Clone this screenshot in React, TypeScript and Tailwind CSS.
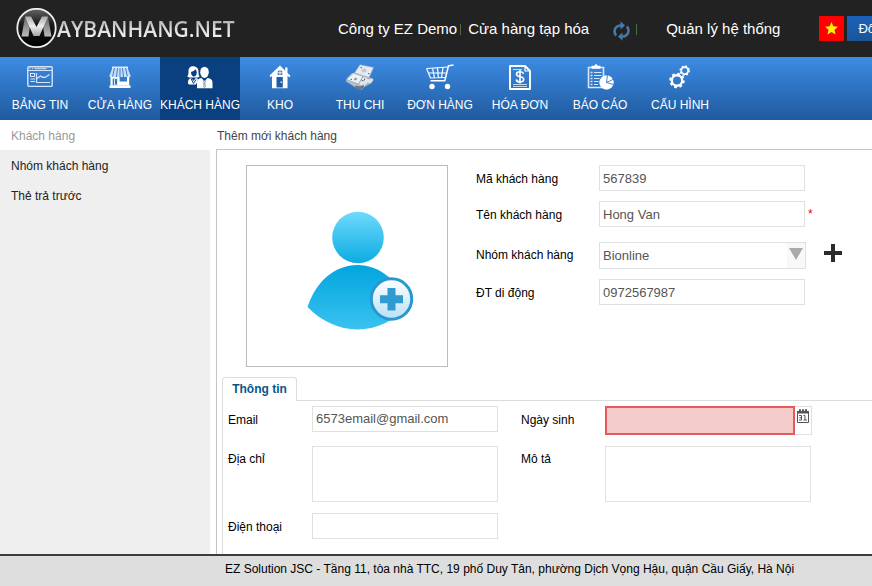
import React from "react";

const fieldBase =
  "border border-[#e0e0e0] bg-white text-[13px] text-[#555] outline-none";

function BoardIcon() {
  return (
    <svg width="26" height="22" viewBox="0 0 26 22" fill="none" stroke="#d6e6fa">
      <rect x="0.8" y="0.8" width="24.4" height="19.6" rx="1.2" strokeWidth="1.4" />
      <path d="M1 4.500h24M2.500 2.700h1M5 2.700h1M7.500 2.700h12" strokeWidth="1" />
      <path d="M3.500 13h4.500M3.500 15.500h4.500" />
      <rect x="3.500" y="7.500" width="4" height="3" />
      <path d="M9.500 7v9.500H23" strokeWidth="1.200" />
      <path d="M10 12.500l3.500-2.500 2.500 1.500 2.500-.3L22.500 8.500" strokeWidth="1.300" />
    </svg>
  );
}

function ShopIcon() {
  return (
    <svg width="22" height="22" viewBox="0 0 22 22" fill="#fff">
      <path d="M3 0.500h16v3H3z" fill="#d9e8fb" />
      <path d="M3 3h16l2.500 6.500v1.500H.5V9.500z" fill="#c9def8" />
      <path d="M5.500 2L3.500 11M8.500 2L7.500 11M11 2v9M13.500 2l1 9M16.500 2l2 9" stroke="#3a7dd0" strokeWidth="1" />
      <path d="M1.500 10.500h2.200v9H1.500zM18 10.500h2.200v9H18zM9 11h1.600v8.500H9zM9 15.500h10v4H9zM3.500 11h6v1.500h-6z" />
      <path d="M5.500 12.500h3v6.500h-3z" fill="#3573c2" stroke="#fff" strokeWidth=".8" />
      <path d="M.5 19.300h21V22H.5z" />
    </svg>
  );
}

function PeopleIcon() {
  return (
    <svg width="26" height="23" viewBox="0 0 26 23" fill="#fff">
      <path d="M6 .3C2.700.2 1.300 3 1.500 6c.1 2-.5 3.300-1.200 4.200C1 11 2 11.500 3 11.500h7c1 0 2-.4 2.500-1-1-1.300-1-2.500-1-4.500C11.500 2.500 9.500.3 6 .3z" />
      <path d="M4 6c2-.5 3.500-1.500 4.200-2.800C9.300 4 9.800 5 9.800 6.500c0 2.500-1.300 4-2.900 4S4 8.800 4 6z" fill="#0a4080" />
      <path d="M1 17.500c-.3-2.500.5-5 3.300-5.500l2.200 3 2.300-3c1.300.1 2 .8 2.200 1.500L9 18.500H2z" />
      <path d="M4 12.500l2.500 5 2.500-4" stroke="#0a4080" strokeWidth="1" fill="none" />
      <ellipse cx="17.500" cy="6.300" rx="4.300" ry="5.600" />
      <path d="M10 22.300v-5.500c0-3 1.500-4.300 4.500-4.800l3 3.500 3-3.500c3.500.5 5 1.800 5 4.800v5.500z" />
      <path d="M17.500 14l.9 1.300-.5.9.4 4.500-.8 1-.8-1 .4-4.500-.5-.9z" fill="#fff" stroke="#0a4080" strokeWidth=".5" />
    </svg>
  );
}

function HouseIcon() {
  return (
    <svg width="22" height="24" viewBox="0 0 22 24" fill="#fff">
      <path d="M11 .4L.5 10.500l1 1.800L3 11v12.300h15.500V11l2 1.300 1-1.500L18.500 8V2.500h-2.300v3.200z" />
      <path d="M8.700 7.500c0-1.500 1-2.300 2.300-2.300s2.300.8 2.300 2.300v2.600H8.700z" fill="#2f6fc0" />
      <path d="M11 5v5M8.500 7.800h5" stroke="#fff" strokeWidth=".9" />
      <path d="M7.500 12h6.300v10.500H7.500z" fill="#205ba8" />
      <path d="M11.500 16.500h1.300v1.500h-1.300z" />
    </svg>
  );
}

function MoneyIcon() {
  return (
    <svg width="28" height="27" viewBox="0 0 28 27">
      <path d="M1 14l5-5 10 2 9 3 2 1-1 4-6 3-5 4-5-2-5-3.500L0 17.500z" fill="#b4c0ce" />
      <path d="M14 .8L27.500 3.500l-4.500 10L8.500 9z" fill="#e6ebf1" stroke="#a5b3c3" strokeWidth=".6" />
      <path d="M7.500 9l9.500 3.500-4.500 7.500L.5 15.500z" fill="#eef2f6" stroke="#8d9db0" strokeWidth=".6" />
      <path d="M16.500 13l4-.5 1.500 2.500 4-1 1.500 2-3 3.500-3-.5-3.500 4-5.500-2.500z" fill="#e0e6ed" stroke="#8798ab" strokeWidth=".6" />
      <path d="M9 21.500l5.500 1 3-2 .5 3-4 2.500-4.500-1.500z" fill="#66768b" />
      <ellipse cx="18" cy="6.500" rx="2.600" ry="2" fill="#c0cad6" />
      <path d="M9 13.500l2.500 1.300-1.700 1.700-2-.7z" fill="#8a99ab" />
      <path d="M14.500 3.500l1.500.3M22 9.500l1.500.3M15.500 16l2 1M19 14.500l-1 2M4.500 15.200l1.500.5" stroke="#52647b" />
    </svg>
  );
}

function CartIcon() {
  return (
    <svg width="28" height="26" viewBox="0 0 28 26" fill="none" stroke="#fff" strokeWidth="1.200">
      <path d="M27.500 1l-5 .8-3.700 15H4.500" strokeWidth="1.500" />
      <path d="M.5 4.500L22 3M.5 4.500l4 9.500 15-.5M2 9h18.500M6.500 4l2 9.800M11.500 4l.8 9.500M17 3.500l-1.500 10" />
      <circle cx="6" cy="22.500" r="2.700" fill="#fff" stroke="none" />
      <circle cx="21.500" cy="22.500" r="2.700" fill="#fff" stroke="none" />
    </svg>
  );
}

function InvoiceIcon() {
  return (
    <svg width="22" height="25" viewBox="0 0 22 25" fill="none" stroke="#fff">
      <path d="M1 1h15L21 6v18H1z" strokeWidth="1.900" strokeLinejoin="round" />
      <path d="M16 1v5h5" strokeWidth="1.200" />
      <path d="M4 4.500h9M4 19.500h14M4 21.500h14" strokeWidth=".9" opacity=".8" />
      <path d="M14.500 8.800C14 7.200 12.700 6.800 11 6.800c-2 0-3.500.8-3.500 2.500 0 3.500 7.200 1.500 7.200 5 0 1.700-1.500 2.700-3.700 2.700-2 0-3.500-.7-3.800-2.500M11 5v13.500" strokeWidth="1.600" />
    </svg>
  );
}

function ReportIcon() {
  return (
    <svg width="27" height="26" viewBox="0 0 27 26" fill="none" stroke="#fff">
      <path d="M1.500 3.500h15v20h-15z" strokeWidth="1.600" stroke="#d8e7fa" />
      <path d="M4.500 1.800h3c0-1 .7-1.500 1.500-1.500s1.500.5 1.500 1.500h3v3h-9z" fill="#fff" stroke="none" />
      <path d="M7 8.500h7.500M7 11.500h7.500M7 14.500h5.500M7 17.500h4.500M7 20.500h4" stroke="#d8e7fa" />
      <path d="M3.500 8.500h2M3.500 11.500h2M3.500 14.500h2M3.500 17.500h2M3.500 20.500h2" strokeWidth="1.500" stroke="#d8e7fa" />
      <circle cx="19.500" cy="18.500" r="7.200" fill="#fff" stroke="none" />
      <path d="M19.500 18.500L20.500 10.500M19.500 18.500L27 15M19.500 18.500l7 2" stroke="#2a66b4" strokeWidth=".8" />
    </svg>
  );
}

function GearsIcon() {
  return (
    <svg width="22" height="24" viewBox="0 0 22 24" fill="none" stroke="#fff">
      <circle cx="8" cy="15.500" r="5.200" strokeWidth="2.400" />
      <circle cx="8" cy="15.500" r="6.800" strokeWidth="2" strokeDasharray="2.670 2.670" />
      <circle cx="15.700" cy="5.600" r="3.500" strokeWidth="1.800" />
      <circle cx="15.700" cy="5.600" r="4.600" strokeWidth="1.400" strokeDasharray="1.800 1.812" />
    </svg>
  );
}

const menu = [
  { label: "BẢNG TIN", icon: <BoardIcon /> },
  { label: "CỬA HÀNG", icon: <ShopIcon /> },
  { label: "KHÁCH HÀNG", icon: <PeopleIcon />, active: true },
  { label: "KHO", icon: <HouseIcon /> },
  { label: "THU CHI", icon: <MoneyIcon /> },
  { label: "ĐƠN HÀNG", icon: <CartIcon /> },
  { label: "HÓA ĐƠN", icon: <InvoiceIcon /> },
  { label: "BÁO CÁO", icon: <ReportIcon /> },
  { label: "CẤU HÌNH", icon: <GearsIcon /> },
];

function Logo() {
  return (
    <a href="#" className="flex w-[322px] shrink-0 items-center pl-[15px]">
      <svg width="42" height="42" viewBox="0 0 42 42" className="shrink-0">
        <defs>
          <linearGradient id="disc" x1="0" y1="0" x2="0" y2="1">
            <stop offset="0" stopColor="#666" />
            <stop offset=".4" stopColor="#1a1a1a" />
            <stop offset="1" stopColor="#000" />
          </linearGradient>
          <linearGradient id="leg" x1="0" y1="0" x2="0" y2="1">
            <stop offset="0" stopColor="#666" />
            <stop offset="1" stopColor="#bbb" />
          </linearGradient>
          <linearGradient id="vee" x1="0" y1="0" x2="0" y2="1">
            <stop offset="0" stopColor="#aaa" />
            <stop offset=".5" stopColor="#eee" />
            <stop offset="1" stopColor="#a5a5a5" />
          </linearGradient>
        </defs>
        <circle cx="21.500" cy="20" r="19.200" fill="url(#disc)" stroke="#efefef" strokeWidth="1.800" />
        <path d="M6.500 28.500L10 9h4.500l1 5-2 14.500zM36.500 28.500L33 9h-4.500l-1 5 2 14.500z" fill="url(#leg)" />
        <path d="M10 8.500h6L21.500 19 27 8.500h6L24.500 28h-6z" fill="url(#vee)" />
      </svg>
      <span className="bg-linear-to-b from-[#999] via-[#ddd] to-white bg-clip-text font-['Open_Sans',sans-serif] text-[21px] leading-7 font-semibold text-transparent">
        AYBANHANG.NET
      </span>
    </a>
  );
}

function Header() {
  return (
    <header className="flex h-[57px] items-center overflow-hidden bg-[#222] text-[15px] whitespace-nowrap text-white">
      <Logo />
      <div className="flex shrink-0 items-center pt-px pl-4">
        <span>Công ty EZ Demo</span>
        <span className="mr-[7px] ml-[3px] h-[11px] w-px bg-[#4a6b45]" />
        <span>Cửa hàng tạp hóa</span>
        <button type="button" aria-label="Làm mới" className="ml-6 pt-[3px]">
          <svg width="17" height="20" viewBox="0 0 17 20" fill="none" stroke="#4479a8" strokeWidth="2.600">
            <path d="M3.200 14.500C.8 12 1 8 3.500 6c1.300-1.200 3-1.700 5-1.500" />
            <path d="M13.800 5.500C16.200 8 16 12 13.500 14c-1.300 1.200-3 1.700-5 1.500" />
            <path d="M7.500.300v8.200L12 4.400zM9.500 11.500v8.200L5 15.600z" fill="#4479a8" stroke="none" />
          </svg>
        </button>
        <span className="ml-[6px] h-[11px] w-px bg-[#4a6b45]" />
        <a href="#" className="ml-[29px]">Quản lý hệ thống</a>
      </div>
      <div className="ml-[39px] flex shrink-0 gap-[3px]">
        <button type="button" aria-label="Tiếng Việt" className="flex size-[25px] items-center justify-center bg-[#f00]">
          <svg width="13" height="13" viewBox="0 0 14 14" fill="#fff200">
            <path d="M7 0l2 4.700 5 .4-3.800 3.400 1.200 5L7 10.800l-4.400 2.700 1.200-5L0 5.100l5-.4z" />
          </svg>
        </button>
        <button type="button" className="h-[25px] bg-linear-to-b from-[#1b62bb] to-[#1b5596] px-[11px] text-[13px]">Đổi</button>
      </div>
    </header>
  );
}

function Field({ id, label, value }: { id: string; label: string; value: string }) {
  return (
    <>
      <label htmlFor={id} className="pt-0.5">{label}</label>
      <input id={id} defaultValue={value} className={`${fieldBase} h-[26px] w-[206px] px-[3px]`} />
    </>
  );
}

function Avatar() {
  return (
    <button type="button" aria-label="Thêm ảnh" className="flex size-[202px] shrink-0 items-center justify-center border border-[#bbb] pt-2.5 pl-[26px]">
      <svg width="108" height="120" viewBox="0 0 108 120">
        <defs>
          <linearGradient id="head" x1="0" y1="0" x2="0" y2="1">
            <stop offset="0" stopColor="#6fdafc" />
            <stop offset="1" stopColor="#0cabe3" />
          </linearGradient>
          <linearGradient id="torso" x1="0" y1="0" x2="0" y2="1">
            <stop offset="0" stopColor="#02a5de" />
            <stop offset="1" stopColor="#3ac2f0" />
          </linearGradient>
          <linearGradient id="badge" x1="0" y1="0" x2="0" y2="1">
            <stop offset="0" stopColor="#fff" />
            <stop offset="1" stopColor="#b9e0f7" />
          </linearGradient>
        </defs>
        <circle cx="52" cy="26.500" r="25.800" fill="url(#head)" />
        <path d="M1.500 96C10 70 29 54 51.500 54S93 70 101.500 96C88 110 70 118.500 51.500 118.500S15 110 1.500 96z" fill="url(#torso)" />
        <circle cx="85.500" cy="88" r="20.200" fill="url(#badge)" stroke="#2899d0" strokeWidth="3" />
        <path d="M81.500 77h8v7.200h7.500v8h-7.500V99.500h-8v-7.300H74v-8h7.500z" fill="#2f9bd1" />
      </svg>
    </button>
  );
}

function CalendarIcon() {
  return (
    <svg width="12" height="14" viewBox="0 0 12 14" fill="none" stroke="#555">
      <path d="M.5 3.500h11v10H.5z" />
      <path d="M0 2h12v2.500H0z" fill="#555" stroke="none" />
      <path d="M2.500 2V.500h1V2M5.500 2V.500h1V2M8.500 2V.500h1V2" />
      <path d="M2 6.500h2.500v4.500H2M2.500 8.700h2M6.500 6.500H8V11M6.500 11h3.500" />
    </svg>
  );
}

export default function App() {
  return (
    <div className="flex min-h-screen flex-col overflow-hidden bg-white font-['Liberation_Sans',Arial,sans-serif] text-xs text-black">
      <Header />
      <nav className="flex h-[63px] overflow-hidden bg-linear-to-b from-[#3d8ce4] to-[#1f5a9f]">
        {menu.map((m) => (
          <a
            key={m.label}
            href="#"
            className={`flex w-20 shrink-0 flex-col items-center whitespace-nowrap text-white ${m.active ? "bg-[#0a4080]" : ""}`}
          >
            <span className="flex h-[40px] items-center justify-center">{m.icon}</span>
            <span className="leading-4">{m.label}</span>
          </a>
        ))}
      </nav>

      <div className="flex grow">
        <aside className="w-[210px] shrink-0 bg-[#efefef]">
          <h2 className="h-[30px] bg-white pl-[11px] leading-[32px] text-[#999]">Khách hàng</h2>
          <a href="#" className="block h-[30px] pl-[11px] leading-[32px] text-[#222]">Nhóm khách hàng</a>
          <a href="#" className="block h-[30px] pl-[11px] leading-[32px] text-[#222]">Thẻ trả trước</a>
        </aside>

        <main className="ml-1.5 flex min-w-0 grow flex-col">
          <h1 className="h-[29px] pl-px leading-[32px] text-[#444]">Thêm mới khách hàng</h1>
          <form className="grow border-t border-l border-[#c4c4c4]">
            <div className="flex pt-[15px] pl-[29px]">
              <Avatar />
              <div className="ml-[28px] flex flex-col">
                <div className="grid grid-cols-[123px_auto] items-center gap-y-2.5">
                  <Field id="code" label="Mã khách hàng" value="567839" />
                  <label htmlFor="name" className="pt-0.5">Tên khách hàng</label>
                  <div className="flex items-center">
                    <input id="name" defaultValue="Hong Van" className={`${fieldBase} h-[26px] w-[206px] px-[3px]`} />
                    <span className="ml-[3px] text-[#e02]">*</span>
                  </div>
                </div>
                <div className="mt-[15px] grid grid-cols-[123px_auto] items-center gap-y-2.5">
                  <label htmlFor="group" className="pb-0.5">Nhóm khách hàng</label>
                  <div className="flex items-center">
                    <div className="relative">
                      <select id="group" className={`${fieldBase} h-[27px] w-[207px] appearance-none px-[3px]`}>
                        <option>Bionline</option>
                      </select>
                      <span className="pointer-events-none absolute top-px right-px flex h-[25px] w-[18px] justify-center bg-[#f8f8f8] pt-[5px]">
                        <svg width="14" height="12" viewBox="0 0 14 12" fill="#aaa">
                          <path d="M0 0h14L7 12z" />
                        </svg>
                      </span>
                    </div>
                    <button type="button" aria-label="Thêm nhóm" className="-mt-1.5 ml-[18px]">
                      <svg width="18" height="18" viewBox="0 0 18 18" fill="#2b2b2b">
                        <path d="M7 0h4v7h7v4h-7v7H7v-7H0V7h7z" />
                      </svg>
                    </button>
                  </div>
                  <Field id="mobile" label="ĐT di động" value="0972567987" />
                </div>
              </div>
            </div>

            <section className="mt-2.5 pl-[5px]">
              <div className="flex">
                <button
                  type="button"
                  className="h-6 w-[75px] rounded-t-[3px] border border-b-0 border-[#ddd] pb-0.5 text-xs font-bold text-[#0b5688]"
                >
                  Thông tin
                </button>
                <span className="grow border-b border-[#ddd]" />
              </div>
              <div className="grid grid-cols-[84px_209px_84px_1fr] items-start gap-y-[11px] border-l border-[#ddd] pt-[5px] pb-[15px] pl-[5px] leading-[28px]">
                <label htmlFor="email" className="h-[26px]">Email</label>
                <input id="email" defaultValue="6573email@gmail.com" className={`${fieldBase} h-[26px] w-[186px] px-[3px]`} />
                <label htmlFor="birth" className="h-[26px]">Ngày sinh</label>
                <div className="flex h-[29px] w-[207px] border border-l-0 border-[#e0e0e0]">
                  <input id="birth" className="-my-px h-[29px] w-[190px] border-2 border-[#e65a5e] bg-[#f4cbcb] px-[3px] text-[13px] outline-none" />
                  <button type="button" aria-label="Chọn ngày" className="flex grow justify-center pt-[2px]">
                    <CalendarIcon />
                  </button>
                </div>
                <label htmlFor="address" className="h-[26px] leading-[26px]">Địa chỉ</label>
                <textarea id="address" className={`${fieldBase} h-[56px] w-[186px] resize-none px-[3px]`} />
                <label htmlFor="note" className="h-[26px] leading-[26px]">Mô tả</label>
                <textarea id="note" className={`${fieldBase} h-[56px] w-[206px] resize-none px-[3px]`} />
                <label htmlFor="phone" className="h-[26px]">Điện thoại</label>
                <input id="phone" className={`${fieldBase} h-[26px] w-[186px] px-[3px]`} />
              </div>
            </section>
          </form>
        </main>
      </div>

      <footer className="h-[32px] border-t-2 border-[#3c3c3c] bg-[#dedede] pl-[225px] leading-[26px] whitespace-nowrap">
        EZ Solution JSC - Tầng 11, tòa nhà TTC, 19 phố Duy Tân, phường Dịch Vọng Hậu, quận Cầu Giấy, Hà Nội
      </footer>
    </div>
  );
}
